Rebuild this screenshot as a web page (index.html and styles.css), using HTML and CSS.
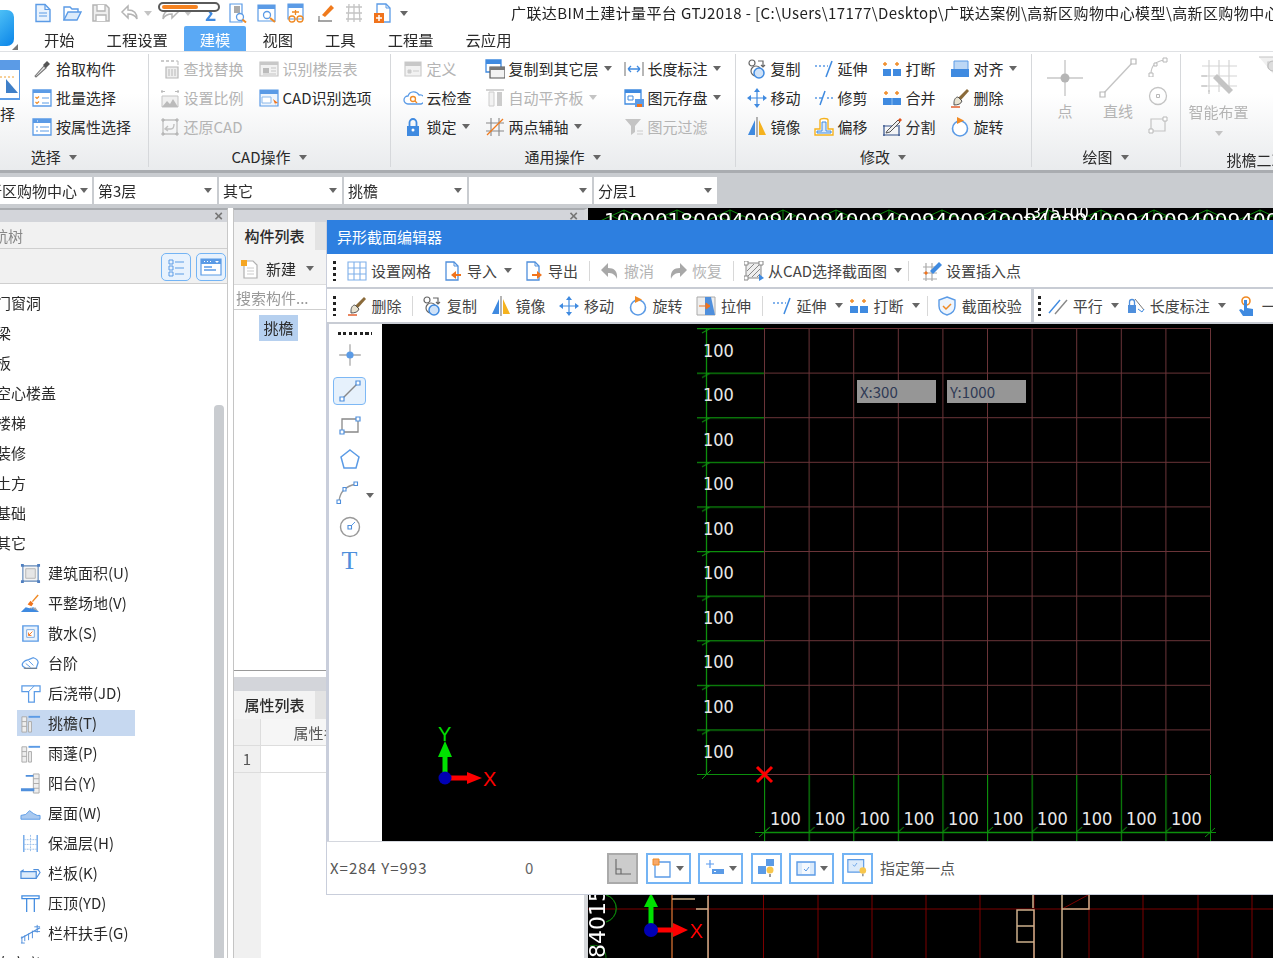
FILE: index.html
```html
<!DOCTYPE html>
<html lang="zh-CN">
<head>
<meta charset="utf-8">
<title>广联达BIM土建计量平台 GTJ2018</title>
<link rel="stylesheet" href="styles.css">
</head>
<body>
<svg class="defs" aria-hidden="true">
  <symbol id="doc" viewBox="0 0 20 20"><path d="M3 1.5h9l5 5v12H3z" fill="#eaf3fd" stroke="#5b9be6" stroke-width="1.4"/><path d="M12 1.5v5h5M6 10h8M6 13h8" fill="none" stroke="#5b9be6" stroke-width="1.2"/></symbol>
  <symbol id="open" viewBox="0 0 20 20"><path d="M2 17V4h6l2 2h6v3" fill="none" stroke="#5b9be6" stroke-width="1.4"/><path d="M2 17l4-8h13l-4 8z" fill="#dcebfb" stroke="#5b9be6" stroke-width="1.4"/></symbol>
  <symbol id="save" viewBox="0 0 20 20"><path d="M2 2h13l3 3v13H2z" fill="#eee" stroke="#b4b4b4" stroke-width="1.5"/><path d="M6 2v6h8V2M5 18v-6h10v6" fill="#fff" stroke="#b4b4b4" stroke-width="1.3"/></symbol>
  <symbol id="undo-g" viewBox="0 0 20 20"><path d="M8 3L2 9l6 6v-4c4 0 7 1 9 5 0-6-3-9-9-9z" fill="#fff" stroke="#b4b4b4" stroke-width="1.5"/></symbol>
  <symbol id="qa1" viewBox="0 0 20 20"><path d="M2 1h12v18H2z" fill="#fff" stroke="#5b9be6" stroke-width="1.2"/><path d="M6 3h6v7H6z" fill="#aaa"/><circle cx="12" cy="14" r="3.5" fill="#fff" stroke="#5b9be6" stroke-width="1.3"/><path d="M14.5 16.5l3.5 3" stroke="#f08a24" stroke-width="2"/></symbol>
  <symbol id="qa2" viewBox="0 0 20 20"><path d="M1 2h17v16H1z" fill="#fff" stroke="#5b9be6" stroke-width="1.2"/><path d="M1 2h17v4H1z" fill="#5b9be6"/><circle cx="10" cy="12" r="3.5" fill="#fff" stroke="#5b9be6" stroke-width="1.3"/><path d="M13 15l5 4" stroke="#f08a24" stroke-width="2.2"/></symbol>
  <symbol id="qa3" viewBox="0 0 20 20"><path d="M2 1h15v15H2z" fill="#fff" stroke="#5b9be6" stroke-width="1.2"/><path d="M2 1h15v4H2z" fill="#5b9be6"/><path d="M6 9h7M9.500 7v5" stroke="#f08a24" stroke-width="1.3"/><circle cx="6" cy="16" r="3" fill="none" stroke="#f08a24" stroke-width="1.3"/><circle cx="14" cy="16" r="3" fill="none" stroke="#f08a24" stroke-width="1.3"/></symbol>
  <symbol id="qa4" viewBox="0 0 20 20"><path d="M7 12L16 2l3 3-9 9z" fill="#f07a1c"/><path d="M3 18h14M4 13v5" stroke="#888" stroke-width="1.3" fill="none"/></symbol>
  <symbol id="qa5" viewBox="0 0 20 20"><path d="M2 4h16M2 10h16M2 16h16M5 1l-1 18M10 1v18M15 1l1 18" stroke="#c4c4c4" stroke-width="1.3" fill="none"/></symbol>
  <symbol id="qa6" viewBox="0 0 20 20"><path d="M4 1h9l4 4v14H4z" fill="#fff" stroke="#5b9be6" stroke-width="1.3"/><path d="M13 1v4h4" fill="none" stroke="#5b9be6"/><path d="M1 10h10v10H1z" fill="#f0731c"/><path d="M3 15h6M6 12v6" stroke="#fff" stroke-width="1.5"/></symbol>
  <symbol id="pick" viewBox="0 0 20 20"><path d="M3 17l9-10 2 2-10 9z" fill="#e8e8e8" stroke="#777" stroke-width="1.1"/><path d="M11 6l4-4 3 3-4 4z" fill="#555"/></symbol>
  <symbol id="batch" viewBox="0 0 20 20"><path d="M1 2h18v16H1z" fill="#fff" stroke="#5b9be6" stroke-width="1.3"/><path d="M1 2h18v3H1z" fill="#5b9be6"/><path d="M3.500 9l1.500 1.500 2-2M3.500 14l1.500 1.500 2-2" fill="none" stroke="#f08a24" stroke-width="1.2"/><path d="M10 10h7M10 15h7" stroke="#5b9be6" stroke-width="1.2"/></symbol>
  <symbol id="prop" viewBox="0 0 20 20"><path d="M1 2h18v16H1z" fill="#fff" stroke="#5b9be6" stroke-width="1.3"/><path d="M1 2h18v4H1z" fill="#5b9be6"/><path d="M5 4h1" stroke="#fff"/><path d="M4 10h2M4 14h2M8 10h9M8 14h9" stroke="#5b9be6" stroke-width="1.2"/></symbol>
  <symbol id="find" viewBox="0 0 20 20"><path d="M1 2h3M6 2h3M11 2h3" stroke="#bbb" stroke-width="1.6"/><path d="M16 2h2v4" fill="none" stroke="#bbb"/><path d="M6 8h12v11H6z" fill="#eee" stroke="#b8b8b8" stroke-width="1.2"/><path d="M9 10v7M12 10v7M15 10v7" stroke="#b8b8b8"/></symbol>
  <symbol id="layer" viewBox="0 0 20 20"><path d="M1 3h18v14H1z" fill="#f2f2f2" stroke="#c4c4c4" stroke-width="1.2"/><path d="M1 3h18v3H1z" fill="#c8c8c8"/><path d="M4 9h6v5H4z" fill="#bbb"/><path d="M12 9h5M12 12h5M4 15h13" stroke="#c4c4c4"/></symbol>
  <symbol id="scale" viewBox="0 0 20 20"><path d="M2 8h16v11H2z" fill="#f0f0f0" stroke="#c4c4c4"/><path d="M2 19l5-6 3 3 3-5 5 8z" fill="#bbb"/><path d="M2 2v3M18 2v3M1 3.500h4M15 3.500h4" stroke="#bbb" stroke-width="1.2"/></symbol>
  <symbol id="cadw" viewBox="0 0 20 20"><path d="M1 2h18v16H1z" fill="#eef5fd" stroke="#5b9be6" stroke-width="1.2"/><path d="M1 2h18v4H1z" fill="#5b9be6"/><path d="M14 11l5 4-3 .5 1 3z" fill="#f0731c"/><path d="M3 9h9v6H3z" fill="#fff" stroke="#8ab8ea"/></symbol>
  <symbol id="restore" viewBox="0 0 20 20"><path d="M3 3h14v14H3z" fill="none" stroke="#c0c0c0" stroke-width="1.3"/><path d="M1 3h4M3 1v4M15 3h4M17 1v4M1 17h4M3 15v4M15 17h4M17 15v4" stroke="#b0b0b0"/><path d="M8 9l-3 3 3 2M6 12h5c2 0 3-2 3-5" fill="none" stroke="#c0c0c0" stroke-width="1.4"/></symbol>
  <symbol id="def" viewBox="0 0 20 20"><path d="M2 3h16v14H2z" fill="#f2f2f2" stroke="#ccc" stroke-width="1.2"/><path d="M2 3h16v4H2z" fill="#c8c8c8"/><path d="M5 11h3v3H5zM10 12h6" fill="#ccc" stroke="#ccc"/></symbol>
  <symbol id="copyl" viewBox="0 0 20 20"><path d="M1 1h15v12H1z" fill="#fff" stroke="#3f8ae0" stroke-width="1.3"/><path d="M1 1h15v4H1z" fill="#3f8ae0"/><path d="M5 8h15v11H5z" fill="#f3f3f3" stroke="#555" stroke-width="1.2"/><path d="M5 8h15v3H5z" fill="#777"/></symbol>
  <symbol id="cloud" viewBox="0 0 20 20"><path d="M5 16a4 4 0 010-8 6 6 0 0111-1 4.500 4.500 0 012 9z" fill="#fff" stroke="#5b9be6" stroke-width="1.3"/><circle cx="10" cy="11" r="2.500" fill="none" stroke="#f08a24" stroke-width="1.3"/><path d="M12 13l2 2" stroke="#f08a24" stroke-width="1.3"/></symbol>
  <symbol id="autoal" viewBox="0 0 20 20"><path d="M1 2h18" stroke="#c4c4c4" stroke-width="1.5"/><path d="M4 4h5v14H4z" fill="#f2f2f2" stroke="#ccc"/><path d="M12 4h5v14h-5z" fill="#ccc"/></symbol>
  <symbol id="lock" viewBox="0 0 20 20"><path d="M4 9h12v10H4z" fill="#3f8ae0"/><path d="M6.500 9V5.500a3.500 3.500 0 017 0V9" fill="none" stroke="#3f8ae0" stroke-width="1.800"/><circle cx="10" cy="13" r="1.500" fill="#fff"/></symbol>
  <symbol id="axis2" viewBox="0 0 20 20"><path d="M6 1v18M14 1v18M1 6h18M1 14h18" stroke="#888" stroke-width="1.1"/><path d="M2 18L18 2" stroke="#f07a1c" stroke-width="1.3"/></symbol>
  <symbol id="lens" viewBox="0 0 20 20"><path d="M1 3v14M19 3v14" stroke="#888" stroke-width="1.2"/><path d="M4 10h12M4 10l3-3M4 10l3 3M16 10l-3-3M16 10l-3 3" fill="none" stroke="#3f8ae0" stroke-width="1.3"/></symbol>
  <symbol id="disk" viewBox="0 0 20 20"><path d="M1 2h16v14H1z" fill="#fff" stroke="#3f8ae0" stroke-width="1.3"/><path d="M1 2h16v3H1z" fill="#3f8ae0"/><path d="M4 8h5v4H4z" fill="none" stroke="#3f8ae0"/><path d="M11 11h9v8h-9z" fill="#5b9be6"/><path d="M13 16h5v3h-5z" fill="#f0731c"/></symbol>
  <symbol id="filter" viewBox="0 0 20 20"><path d="M1 2h16l-6 7v6l-4 3V9z" fill="#c4c4c4"/><path d="M13 14h6M13 17h6" stroke="#ccc"/></symbol>
  <symbol id="copy" viewBox="0 0 20 20"><circle cx="5" cy="4" r="3" fill="none" stroke="#666" stroke-width="1.200"/><path d="M11 2h5v6M14 6l2 2 2-2" fill="none" stroke="#666" stroke-width="1.200"/><circle cx="9" cy="12" r="5" fill="none" stroke="#666" stroke-width="1.200"/><circle cx="12" cy="14" r="5" fill="#cfe2f8" stroke="#3f8ae0" stroke-width="1.500"/></symbol>
  <symbol id="extend" viewBox="0 0 20 20"><path d="M1 7h2M5 7h2M9 7h2M13 7h1" stroke="#5b9be6" stroke-width="1.300"/><path d="M18 2l-6 16" stroke="#3f8ae0" stroke-width="1.500"/></symbol>
  <symbol id="break" viewBox="0 0 20 20"><path d="M1 10h8v7H1zM11 10h8v7h-8z" fill="#3f8ae0"/><path d="M3 3v4M1 5h4M15 3v4M13 5h4" stroke="#f08a24" stroke-width="1.400"/></symbol>
  <symbol id="merge" viewBox="0 0 20 20"><path d="M1 10h18v7H1z" fill="#3f8ae0"/><path d="M10 10v7" stroke="#8fc0f2"/><path d="M4 3v4M2 5h4M15 3v4M13 5h4" stroke="#f08a24" stroke-width="1.400"/></symbol>
  <symbol id="aligned" viewBox="0 0 20 20"><path d="M4 2h14v9H4z" fill="#bcd7f5" stroke="#5b9be6"/><path d="M1 10h18v8H1z" fill="#3f8ae0"/></symbol>
  <symbol id="move" viewBox="0 0 20 20"><path d="M10 3v14M3 10h14" stroke="#3f8ae0" stroke-width="1.200"/><path d="M10 0l3 4H7zM10 20l-3-4h6zM0 10l4-3v6zM20 10l-4 3V7z" fill="#3f8ae0"/></symbol>
  <symbol id="trim" viewBox="0 0 20 20"><path d="M1 10h2M13 10h2M17 10h2" stroke="#5b9be6" stroke-width="1.300"/><path d="M11 3L6 17" stroke="#3f8ae0" stroke-width="1.500"/><path d="M5 10h4" stroke="#3f8ae0" stroke-width="1.300"/></symbol>
  <symbol id="del" viewBox="0 0 20 20"><path d="M8 10L17 1l2 2-9 10z" fill="#8a6a3a"/><path d="M4 15c0-4 2-6 4-6l4 4c-1 3-4 4-8 4z" fill="#e8e2d0" stroke="#555"/><path d="M1 19h9" stroke="#e0521c" stroke-width="1.400"/></symbol>
  <symbol id="mirror" viewBox="0 0 20 20"><path d="M8 3v15H1z" fill="#3f8ae0"/><path d="M12 3v15h7z" fill="#f5b21e"/><path d="M10 0v20" stroke="#777" stroke-width="1.100"/></symbol>
  <symbol id="offset" viewBox="0 0 20 20"><path d="M1 18v-6h5V3c0-2 8-2 8 0v9h5v6z" fill="#fff" stroke="#f5b21e" stroke-width="1.400"/><path d="M3 16v-2h5V5h4v9h5v2z" fill="#dcebfb" stroke="#3f8ae0"/></symbol>
  <symbol id="split" viewBox="0 0 20 20"><path d="M1 9h15M1 18h17M2 8v11M17 8v11" fill="none" stroke="#32518a" stroke-width="1.200"/><path d="M5 14L16 3l2 2L8 15l-4 1z" fill="#eee" stroke="#555"/><path d="M16 3l2-2 2 2-2 2z" fill="#e0521c"/></symbol>
  <symbol id="rotate" viewBox="0 0 20 20"><circle cx="10" cy="11.500" r="7.500" fill="#fff" stroke="#5b9be6" stroke-width="1.600"/><path d="M7 0l7 3.500L7 7z" fill="#f08a24"/></symbol>
  <symbol id="bpoint" viewBox="0 0 40 40"><path d="M20 2v36M2 20h36" stroke="#c8c8c8" stroke-width="1.400"/><circle cx="20" cy="20" r="4.500" fill="#b5b5b5"/></symbol>
  <symbol id="bline" viewBox="0 0 40 40"><path d="M4 37L36 3" stroke="#c4c4c4" stroke-width="1.400"/><path d="M2 34h5v5H2zM33 1h5v5h-5z" fill="#fff" stroke="#b8b8b8" stroke-width="1.200"/></symbol>
  <symbol id="sarc" viewBox="0 0 20 20"><path d="M3 17C3 9 8 4 17 3" fill="none" stroke="#c4c4c4" stroke-width="1.200"/><path d="M1 16h4v4H1zM15 1h4v4h-4zM6 6h3v3H6z" fill="#fff" stroke="#b8b8b8"/></symbol>
  <symbol id="scirc" viewBox="0 0 20 20"><circle cx="10" cy="10" r="8.500" fill="none" stroke="#c4c4c4" stroke-width="1.300"/><path d="M8.500 8.500h3v3h-3z" fill="#fff" stroke="#b8b8b8"/></symbol>
  <symbol id="srect" viewBox="0 0 20 20"><path d="M3 5h14v12H3z" fill="none" stroke="#c4c4c4" stroke-width="1.200"/><path d="M1 15h4v4H1zM15 3h4v4h-4z" fill="#fff" stroke="#b8b8b8"/></symbol>
  <symbol id="smart" viewBox="0 0 40 40"><path d="M10 2v32M20 2v32M30 2v32M3 8h35M3 18h35M3 28h35" stroke="#d4d4d4" stroke-width="1.200"/><path d="M14 20l4-4 16 16-4 4z" fill="#c4c4c4"/><path d="M2 18h6M2 28h6M10 36v-4" stroke="#bbb"/></symbol>
  <symbol id="corner" viewBox="0 0 20 20"><path d="M0 1h20v5H9v5c0 3 6 3 6 5v3" fill="#f0f0f0" stroke="#c4c4c4" stroke-width="1.200"/><circle cx="14" cy="10" r="5" fill="#ddd" stroke="#bbb"/></symbol>
  <symbol id="big" viewBox="0 0 40 40"><path d="M0 1h40v38H0z" fill="#fff" stroke="#5b9be6" stroke-width="2"/><path d="M0 1h40v9H0z" fill="#5b9be6"/><path d="M4 17h32" stroke="#f0a030" stroke-dasharray="2 2"/><path d="M26 19l12 14H26z" fill="#3f7fc8"/></symbol>
  <symbol id="l1" viewBox="0 0 26 26"><path d="M6 6h4v4H6zM6 12h4v4H6zM6 18h4v4H6z" fill="#e8f2fd" stroke="#5b9be6"/><path d="M12 8h9M12 14h9M12 20h9" stroke="#5b9be6" stroke-width="1.200"/></symbol>
  <symbol id="l2" viewBox="0 0 26 26"><path d="M3 5h20v16H3z" fill="#fff" stroke="#5b9be6" stroke-width="1.200"/><path d="M3 5h20v5H3z" fill="#5b9be6"/><path d="M6 13h8M6 16h12" stroke="#5b9be6" stroke-width="1.400"/><path d="M6 7.500h1M9 7.500h1M12 7.500h1" stroke="#fff"/><path d="M17 7h4l-2 2z" fill="#fff"/></symbol>
  <symbol id="newd" viewBox="0 0 20 20"><path d="M4 2h9l4 4v13H4z" fill="#fff" stroke="#b0b0b0" stroke-width="1.200"/><path d="M7 9h7M7 12h7M7 15h7" stroke="#ccc"/><path d="M1 1h6v6H1z" fill="#f5a623"/></symbol>
  <symbol id="t-area" viewBox="0 0 22 22"><path d="M3 3h16v16H3z" fill="#f4f4f4" stroke="#5f86b8" stroke-width="1.200"/><path d="M6 6h10v10H6z" fill="#e6e6e6" stroke="#b4b4b4"/><path d="M1 1h3v3H1zM18 1h3v3h-3zM1 18h3v3H1zM18 18h3v3h-3z" fill="#4f7fc0"/></symbol>
  <symbol id="t-flat" viewBox="0 0 22 22"><path d="M1 20l5-5 4 1 4-1 6 5z" fill="#3f8ae0"/><path d="M8 12l3-4 3 3-2 3z" fill="#f0731c"/><path d="M13 9l6-7" stroke="#f08a24" stroke-width="1.500"/><path d="M10 15l2 2 4-2 3 4" fill="#aaa"/></symbol>
  <symbol id="t-apron" viewBox="0 0 22 22"><path d="M3 3h16v16H3z" fill="#e9f2fc" stroke="#5b9be6" stroke-width="1.500"/><path d="M7 7h8v8H7z" fill="#fff" stroke="#7aa9e0"/><path d="M13 9l-4 4M9 10v3h3" fill="none" stroke="#f0731c"/></symbol>
  <symbol id="t-step" viewBox="0 0 22 22"><path d="M3 14c-2-3 1-6 6-7l5-2c3 1 5 3 5 5l-2 6H6z" fill="#fff" stroke="#5b9be6" stroke-width="1.300"/><path d="M6 11l5 4M9 8l5 5" stroke="#5b9be6"/><path d="M4 16h14" stroke="#777"/></symbol>
  <symbol id="t-strip" viewBox="0 0 22 22"><path d="M2 3h19v6h-6v11H9V9H2z" fill="#fff" stroke="#5b9be6" stroke-width="1.300"/><path d="M9 9l6-6" stroke="#5b9be6"/></symbol>
  <symbol id="t-eave" viewBox="0 0 22 22"><path d="M2 4h5v16H2z" fill="#eee" stroke="#aaa"/><path d="M2 9h5M2 14h5M9 4h4M9 9h3v11H9z" fill="#eee" stroke="#aaa"/><path d="M9 3h12v2H9z" fill="#5b9be6"/></symbol>
  <symbol id="t-bal" viewBox="0 0 22 22"><path d="M14 1h6v20h-6z" fill="#eee" stroke="#aaa"/><path d="M14 6h6M14 11h6M14 16h6" stroke="#aaa"/><path d="M6 2h8v2H6zM1 16h14v3H1z" fill="#4f8fdc"/></symbol>
  <symbol id="t-roof" viewBox="0 0 22 22"><path d="M1 13l5-1 4-4 4 3 4 2h3v4H1z" fill="#a9c9f0" stroke="#5b9be6"/></symbol>
  <symbol id="t-ins" viewBox="0 0 22 22"><path d="M4 2v18M18 2v18" stroke="#5b9be6" stroke-width="1.300"/><path d="M11 2v18M4 7h14M4 12h14M4 17h14" stroke="#9cc0ea" stroke-dasharray="2 1"/></symbol>
  <symbol id="t-pan" viewBox="0 0 22 22"><path d="M1 9h16v7H1z" fill="#dcebfb" stroke="#4f8fdc" stroke-width="1.300"/><path d="M1 9l3-2M14 7h5l2 3-4 6" fill="none" stroke="#4f8fdc" stroke-width="1.200"/></symbol>
  <symbol id="t-cop" viewBox="0 0 22 22"><path d="M2 3h18v3H2z" fill="#fff" stroke="#3f8ae0" stroke-width="1.300"/><path d="M7 6v14M15 6v14" stroke="#3f8ae0" stroke-width="1.300"/></symbol>
  <symbol id="t-rail" viewBox="0 0 22 22"><path d="M1 16l20-11" stroke="#4f8fdc" stroke-width="1.300"/><path d="M2 14v7M5 13v6M9 11v7M13 8v8M18 2v8M15 4h6M15 9h6M1 21h4" stroke="#4f8fdc" fill="none"/></symbol>
  <symbol id="d-grid" viewBox="0 0 20 20"><path d="M1 1h18v18H1zM7 1v18M13 1v18M1 7h18M1 13h18" fill="#fff" stroke="#7fb0ea" stroke-width="1.100"/></symbol>
  <symbol id="d-imp" viewBox="0 0 20 20"><path d="M3 1h8l4 4v14H3z" fill="#fff" stroke="#4f8fdc" stroke-width="1.300"/><path d="M11 1v4h4" fill="none" stroke="#4f8fdc"/><path d="M18 13h-5V10l-5 4 5 4v-3h5z" fill="#f0731c"/></symbol>
  <symbol id="d-exp" viewBox="0 0 20 20"><path d="M3 1h8l4 4v14H3z" fill="#fff" stroke="#4f8fdc" stroke-width="1.300"/><path d="M11 1v4h4" fill="none" stroke="#4f8fdc"/><path d="M8 13h5V10l5 4-5 4v-3H8z" fill="#f0731c"/></symbol>
  <symbol id="d-undo" viewBox="0 0 20 20"><path d="M8 2L1 9l7 7v-4c4 0 7 1 9 6 1-8-3-11-9-11z" fill="#a8a8a8"/></symbol>
  <symbol id="d-redo" viewBox="0 0 20 20"><path d="M12 2l7 7-7 7v-4c-4 0-7 1-9 6-1-8 3-11 9-11z" fill="#a8a8a8"/></symbol>
  <symbol id="d-cad" viewBox="0 0 20 20"><path d="M2 2h15v15H2z" fill="#eee" stroke="#888"/><path d="M3 10l7-7M3 16L16 3M8 16l8-8M13 16l3-3" stroke="#888"/><path d="M0 0h4v4H0zM15 0h4v4h-4zM0 15h4v4H0z" fill="#fff" stroke="#888"/><path d="M15 13l5 4-5 3z" fill="#3f8ae0"/></symbol>
  <symbol id="d-ins" viewBox="0 0 20 20"><path d="M1 6h14M1 12h14M1 18h14M4 2v18M10 2v18" stroke="#aaa" stroke-width="1.200"/><path d="M8 10L17 1l3 3-9 9z" fill="#3f8ae0"/><path d="M4 10l2 2-2 2-2-2z" fill="#f0731c"/></symbol>
  <symbol id="d-str" viewBox="0 0 20 20"><path d="M1 1h18v18H1z" fill="#eee" stroke="#aaa"/><path d="M9 1h6l4 18H9z" fill="#4f8fdc"/><path d="M3 10h10M10 7l4 3-4 3z" fill="#f0731c" stroke="#f0731c"/></symbol>
  <symbol id="d-chk" viewBox="0 0 20 20"><path d="M10 1l8 3v6c0 5-4 8-8 9-4-1-8-4-8-9V4z" fill="#eef5fd" stroke="#5b9be6" stroke-width="1.400"/><path d="M6 10l3 3 5-5" fill="none" stroke="#f08a24" stroke-width="1.500"/></symbol>
  <symbol id="d-par" viewBox="0 0 20 20"><path d="M1 17L12 4" stroke="#3f8ae0" stroke-width="1.400"/><path d="M7 18L19 4" stroke="#888" stroke-width="1.400"/></symbol>
  <symbol id="d-len" viewBox="0 0 20 20"><path d="M3 9h8v8H3z" fill="#4f8fdc"/><path d="M4.500 9V6a2.500 2.500 0 015 0v3" fill="none" stroke="#4f8fdc" stroke-width="1.300"/><path d="M10 3l9 11" stroke="#777"/><path d="M13 13l4 3 2-3" fill="none" stroke="#3f8ae0"/></symbol>
  <symbol id="d-tch" viewBox="0 0 20 20"><circle cx="9" cy="5" r="4" fill="none" stroke="#f08a24" stroke-width="1.600"/><path d="M7 4h3v8l6 1v7H6l-4-6 2-1 3 2z" fill="#3f8ae0"/></symbol>
  <symbol id="p-pt" viewBox="0 0 20 20"><path d="M10 1v18M1 10h18" stroke="#aaa" stroke-width="1.100"/><circle cx="10" cy="10" r="3" fill="#5b9be6"/></symbol>
  <symbol id="p-line" viewBox="0 0 24 24"><path d="M4 20L20 4" stroke="#888" stroke-width="1.400"/><path d="M2 18h4v4H2zM18 2h4v4h-4z" fill="#fff" stroke="#4f8fdc" stroke-width="1.200"/></symbol>
  <symbol id="p-rect" viewBox="0 0 24 24"><path d="M4 6h16v13H4z" fill="none" stroke="#888" stroke-width="1.300"/><path d="M2 17h4v4H2zM18 4h4v4h-4z" fill="#fff" stroke="#4f8fdc" stroke-width="1.200"/></symbol>
  <symbol id="p-poly" viewBox="0 0 24 24"><path d="M12 3l9 7-3 11H6L3 10z" fill="#fff" stroke="#5b9be6" stroke-width="1.500"/></symbol>
  <symbol id="p-arc" viewBox="0 0 24 24"><path d="M3 20C4 11 10 5 20 3" fill="none" stroke="#999" stroke-width="1.300"/><path d="M1 19h3.500v3.500H1zM18 1h3.500v3.500H18zM7 6.500h3V10H7z" fill="#fff" stroke="#4f8fdc" stroke-width="1.100"/></symbol>
  <symbol id="p-circ" viewBox="0 0 24 24"><circle cx="12" cy="12" r="9.500" fill="none" stroke="#999" stroke-width="1.400"/><path d="M12 12l5-5" stroke="#5b9be6"/><path d="M10 10.500h3.500V14H10z" fill="#fff" stroke="#4f8fdc" stroke-width="1.100"/></symbol>
  <symbol id="s-ortho" viewBox="0 0 20 20"><path d="M3 1v15h15M3 11h5v5" fill="none" stroke="#666" stroke-width="1.100"/></symbol>
  <symbol id="s-snap" viewBox="0 0 20 20"><path d="M3 4h15v15H3z" fill="#fff" stroke="#5b9be6" stroke-width="1.300"/><path d="M1 1h6v6H1z" fill="#f7a869" stroke="#f08a24"/></symbol>
  <symbol id="s-plus" viewBox="0 0 20 20"><path d="M5 2v8M1 6h8" stroke="#5b9bf0" stroke-width="1.200"/><path d="M7 11h12v5H7z" fill="#5b9be6"/><path d="M9 13.500h2" stroke="#fff"/></symbol>
  <symbol id="s-tip1" viewBox="0 0 20 20"><path d="M10 1h8v7h-8zM2 8h8v8H2z" fill="#5b9be6"/><circle cx="14" cy="12" r="3.500" fill="#f8c64c"/><path d="M13 16h2v3h-2z" fill="#999"/></symbol>
  <symbol id="s-win" viewBox="0 0 20 20"><path d="M1 4h18v13H1z" fill="#dcebfb" stroke="#5b9be6" stroke-width="1.400"/><path d="M6 5h8v11H6z" fill="#fff" opacity=".7"/><path d="M8 11l2 2 3-4" fill="none" stroke="#5b9be6"/></symbol>
  <symbol id="s-tip2" viewBox="0 0 24 24"><path d="M1 2h19v15H1z" fill="#dcebfb" stroke="#5b9be6" stroke-width="1.400"/><path d="M7 8l2 2 3-4" fill="none" stroke="#5b9be6"/><circle cx="19" cy="15" r="4" fill="#f8c64c"/><path d="M18 19h2v3h-2z" fill="#999"/></symbol>
</svg>

<div class="app">
  <header class="titlebar">
    <div class="logo-slot"><span class="logo"></span><span class="logo-mark"></span></div>
    <div class="quick">
      <svg class="ic"><use href="#doc"/></svg>
      <svg class="ic"><use href="#open"/></svg>
      <svg class="ic"><use href="#save"/></svg>
      <span class="qa-drop"><svg class="ic"><use href="#undo-g"/></svg><i class="car car-off"></i></span>
      <span class="qa-drop"><svg class="ic flip"><use href="#undo-g"/></svg><i class="car car-off"></i></span>
      <span class="sigma">Σ</span>
      <svg class="ic"><use href="#qa1"/></svg>
      <svg class="ic"><use href="#qa2"/></svg>
      <svg class="ic"><use href="#qa3"/></svg>
      <svg class="ic"><use href="#qa4"/></svg>
      <svg class="ic"><use href="#qa5"/></svg>
      <svg class="ic"><use href="#qa6"/></svg>
      <i class="car qa-more"></i>
    </div>
    <div class="pill"><span class="pill-bar"></span></div>
    <div class="apptitle">广联达BIM土建计量平台 GTJ2018 - [C:\Users\17177\Desktop\广联达案例\高新区购物中心模型\高新区购物中心模型.GTJ]</div>
  </header>

  <nav class="tabs">
    <span class="tab">开始</span><span class="tab">工程设置</span><span class="tab tab-on">建模</span><span class="tab">视图</span><span class="tab">工具</span><span class="tab">工程量</span><span class="tab">云应用</span>
  </nav>

  <section class="ribbon">
    <div class="grp g1">
      <div class="grp-body">
        <div class="bigbtn"><svg class="ic-big"><use href="#big"/></svg><span>选择</span></div>
        <div class="col">
          <div class="it"><svg class="ic"><use href="#pick"/></svg>拾取构件</div>
          <div class="it"><svg class="ic"><use href="#batch"/></svg>批量选择</div>
          <div class="it"><svg class="ic"><use href="#prop"/></svg>按属性选择</div>
        </div>
      </div>
      <div class="grp-label">选择<i class="car"></i></div>
    </div>
    <div class="grp g2">
      <div class="grp-body">
        <div class="col c99">
          <div class="it off"><svg class="ic"><use href="#find"/></svg>查找替换</div>
          <div class="it off"><svg class="ic"><use href="#scale"/></svg>设置比例</div>
          <div class="it off"><svg class="ic"><use href="#restore"/></svg>还原CAD</div>
        </div>
        <div class="col">
          <div class="it off"><svg class="ic"><use href="#layer"/></svg>识别楼层表</div>
          <div class="it"><svg class="ic"><use href="#cadw"/></svg>CAD识别选项</div>
        </div>
      </div>
      <div class="grp-label">CAD操作<i class="car"></i></div>
    </div>
    <div class="grp g3">
      <div class="grp-body">
        <div class="col c82">
          <div class="it off"><svg class="ic"><use href="#def"/></svg>定义</div>
          <div class="it"><svg class="ic"><use href="#cloud"/></svg>云检查</div>
          <div class="it"><svg class="ic"><use href="#lock"/></svg>锁定<i class="car"></i></div>
        </div>
        <div class="col c139">
          <div class="it"><svg class="ic"><use href="#copyl"/></svg>复制到其它层<i class="car"></i></div>
          <div class="it off"><svg class="ic"><use href="#autoal"/></svg>自动平齐板<i class="car car-off"></i></div>
          <div class="it"><svg class="ic"><use href="#axis2"/></svg>两点辅轴<i class="car"></i></div>
        </div>
        <div class="col">
          <div class="it"><svg class="ic"><use href="#lens"/></svg>长度标注<i class="car"></i></div>
          <div class="it"><svg class="ic"><use href="#disk"/></svg>图元存盘<i class="car"></i></div>
          <div class="it off"><svg class="ic"><use href="#filter"/></svg>图元过滤</div>
        </div>
      </div>
      <div class="grp-label">通用操作<i class="car"></i></div>
    </div>
    <div class="grp g4">
      <div class="grp-body">
        <div class="col c67">
          <div class="it"><svg class="ic"><use href="#copy"/></svg>复制</div>
          <div class="it"><svg class="ic"><use href="#move"/></svg>移动</div>
          <div class="it"><svg class="ic"><use href="#mirror"/></svg>镜像</div>
        </div>
        <div class="col c68">
          <div class="it"><svg class="ic"><use href="#extend"/></svg>延伸</div>
          <div class="it"><svg class="ic"><use href="#trim"/></svg>修剪</div>
          <div class="it"><svg class="ic"><use href="#offset"/></svg>偏移</div>
        </div>
        <div class="col c68">
          <div class="it"><svg class="ic"><use href="#break"/></svg>打断</div>
          <div class="it"><svg class="ic"><use href="#merge"/></svg>合并</div>
          <div class="it"><svg class="ic"><use href="#split"/></svg>分割</div>
        </div>
        <div class="col">
          <div class="it"><svg class="ic"><use href="#aligned"/></svg>对齐<i class="car"></i></div>
          <div class="it"><svg class="ic"><use href="#del"/></svg>删除</div>
          <div class="it"><svg class="ic"><use href="#rotate"/></svg>旋转</div>
        </div>
      </div>
      <div class="grp-label">修改<i class="car"></i></div>
    </div>
    <div class="grp g5">
      <div class="grp-body">
        <div class="drawbtn"><svg class="ic-big"><use href="#bpoint"/></svg><span>点</span></div>
        <div class="drawbtn"><svg class="ic-big"><use href="#bline"/></svg><span>直线</span></div>
        <div class="col small">
          <svg class="ic"><use href="#sarc"/></svg>
          <svg class="ic"><use href="#scirc"/></svg>
          <svg class="ic"><use href="#srect"/></svg>
        </div>
      </div>
      <div class="grp-label">绘图<i class="car"></i></div>
    </div>
    <div class="grp g6">
      <div class="grp-body">
        <div class="drawbtn smartbtn"><svg class="ic-big"><use href="#smart"/></svg><span>智能布置</span><i class="car car-off"></i></div>
        <svg class="ic cornerico"><use href="#corner"/></svg>
      </div>
      <div class="grp-label g6-label">挑檐二次编辑</div>
    </div>
  </section>

  <div class="selbar">
    <div class="sel sel-first"><span>高新区购物中心</span><i class="car"></i></div>
    <div class="sel"><span>第3层</span><i class="car"></i></div>
    <div class="sel"><span>其它</span><i class="car"></i></div>
    <div class="sel"><span>挑檐</span><i class="car"></i></div>
    <div class="sel"><span></span><i class="car"></i></div>
    <div class="sel"><span>分层1</span><i class="car"></i></div>
  </div>

  <main class="work">
    <aside class="nav">
      <div class="pane-head"><span class="close">×</span></div>
      <div class="nav-title">导航树</div>
      <div class="nav-tools">
        <span class="navbtn"><svg class="ic-nav"><use href="#l1"/></svg></span>
        <span class="navbtn"><svg class="ic-nav"><use href="#l2"/></svg></span>
      </div>
      <div class="tree-wrap">
        <ul class="tree">
          <li class="lv1">门窗洞</li>
          <li class="lv1">梁</li>
          <li class="lv1">板</li>
          <li class="lv1">空心楼盖</li>
          <li class="lv1">楼梯</li>
          <li class="lv1">装修</li>
          <li class="lv1">土方</li>
          <li class="lv1">基础</li>
          <li class="lv1">其它</li>
          <li><svg class="ic-t"><use href="#t-area"/></svg>建筑面积(U)</li>
          <li><svg class="ic-t"><use href="#t-flat"/></svg>平整场地(V)</li>
          <li><svg class="ic-t"><use href="#t-apron"/></svg>散水(S)</li>
          <li><svg class="ic-t"><use href="#t-step"/></svg>台阶</li>
          <li><svg class="ic-t"><use href="#t-strip"/></svg>后浇带(JD)</li>
          <li class="on"><svg class="ic-t"><use href="#t-eave"/></svg>挑檐(T)</li>
          <li><svg class="ic-t"><use href="#t-eave"/></svg>雨蓬(P)</li>
          <li><svg class="ic-t"><use href="#t-bal"/></svg>阳台(Y)</li>
          <li><svg class="ic-t"><use href="#t-roof"/></svg>屋面(W)</li>
          <li><svg class="ic-t"><use href="#t-ins"/></svg>保温层(H)</li>
          <li><svg class="ic-t"><use href="#t-pan"/></svg>栏板(K)</li>
          <li><svg class="ic-t"><use href="#t-cop"/></svg>压顶(YD)</li>
          <li><svg class="ic-t"><use href="#t-rail"/></svg>栏杆扶手(G)</li>
          <li class="lv1">自定义</li>
        </ul>
        <div class="scroll"></div>
      </div>
    </aside>

    <section class="mid">
      <div class="pane-head"><span class="close">×</span></div>
      <div class="mid-tabs"><span class="mid-tab">构件列表</span></div>
      <div class="mid-tools"><svg class="ic"><use href="#newd"/></svg><span>新建</span><i class="car"></i></div>
      <div class="mid-search">搜索构件...</div>
      <div class="mid-list"><span class="chip">挑檐</span></div>
      <div class="mid-sp"></div>
      <div class="pane-head pane-head2"></div>
      <div class="mid-tabs"><span class="mid-tab">属性列表</span></div>
      <div class="ptable">
        <div class="prow phead"><span class="pno"></span><span class="pname">属性名称</span></div>
        <div class="prow"><span class="pno">1</span><span class="pname"></span></div>
        <div class="pfill"><span class="pno"></span></div>
      </div>
    </section>

    <section class="cad">
      <svg class="cad-svg" viewBox="588 208 685 750">
        <defs>
          <pattern id="roofs" x="598" y="208" width="53" height="14" patternUnits="userSpaceOnUse"><path d="M0 14L26 2l26 12M26 2v12M14 8l12 6 12-6" fill="none" stroke="#0c8a0c"/></pattern>
        </defs>
        <rect x="588" y="208" width="685" height="750" fill="#000"/>
        <rect x="598" y="208" width="675" height="12" fill="url(#roofs)"/>
        <text class="cad-top" x="604" y="227">1000018009400940094009400940094009400940094009400940094009400940094009400940094</text>
        <text class="cad-top2" x="1022" y="218">1375100</text>
        <path class="cad-red" d="M588 909H1273M708.500 895V958M763.500 895V958M818 895V958M872 895V958M926 895V958M980 895V958M1034 895V958M1089 895V958M1143 895V958M1198 895V958M1252 895V958M1062 909L1088 895"/>
        <path class="cad-org" d="M672 895V958"/>
        <path class="cad-tan" d="M708 896V958M672 899H695M696 909H708M1062 895V909H1089V895M1017 910H1034V942H1017ZM1017 926H1034M1034 910V958M1062 909V958M1033 895V908"/>
        <path class="cad-grn" d="M606 895a14 14 0 0 1 0 27a14 14 0 0 0 0-27M590 946a12 12 0 0 1 16 12"/>
        <text class="cad-rot" transform="translate(605 958) rotate(-90)">84015</text>
        <path class="ax-g" d="M651 932V904"/><path class="ax-gf" d="M651 893l7 14h-14z"/>
        <path class="ax-r" d="M651 930H676"/><path class="ax-rf" d="M688 930l-15-7v14z"/>
        <circle class="ax-b" cx="651" cy="930" r="7"/>
        <text class="ax-tr" x="690" y="938">X</text>
      </svg>
    </section>
  </main>

  <div class="dialog">
    <div class="dlg-title">异形截面编辑器</div>
    <div class="dlg-tb">
      <span class="grip"></span>
      <span class="di"><svg class="ic"><use href="#d-grid"/></svg>设置网格</span>
      <span class="di"><svg class="ic"><use href="#d-imp"/></svg>导入<i class="car"></i></span>
      <span class="di"><svg class="ic"><use href="#d-exp"/></svg>导出</span>
      <span class="sep"></span>
      <span class="di off"><svg class="ic"><use href="#d-undo"/></svg>撤消</span>
      <span class="di off di-redo"><svg class="ic"><use href="#d-redo"/></svg>恢复</span>
      <span class="sep"></span>
      <span class="di"><svg class="ic"><use href="#d-cad"/></svg>从CAD选择截面图<i class="car"></i></span>
      <span class="sep sep-tight"></span>
      <span class="di"><svg class="ic"><use href="#d-ins"/></svg>设置插入点</span>
    </div>
    <div class="dlg-tb dlg-tb2">
      <span class="grip"></span>
      <span class="di"><svg class="ic"><use href="#del"/></svg>删除</span>
      <span class="sep"></span>
      <span class="di"><svg class="ic"><use href="#copy"/></svg>复制</span>
      <span class="di"><svg class="ic"><use href="#mirror"/></svg>镜像</span>
      <span class="di"><svg class="ic"><use href="#move"/></svg>移动</span>
      <span class="di"><svg class="ic"><use href="#rotate"/></svg>旋转</span>
      <span class="di"><svg class="ic"><use href="#d-str"/></svg>拉伸</span>
      <span class="sep"></span>
      <span class="di dd"><svg class="ic"><use href="#extend"/></svg>延伸<i class="car"></i></span>
      <span class="di dd"><svg class="ic"><use href="#break"/></svg>打断<i class="car"></i></span>
      <span class="sep sep-after"></span>
      <span class="di"><svg class="ic"><use href="#d-chk"/></svg>截面校验</span>
      <span class="tb-end"></span>
      <span class="grip grip2"></span>
      <span class="di dd"><svg class="ic"><use href="#d-par"/></svg>平行<i class="car"></i></span>
      <span class="di dd"><svg class="ic"><use href="#d-len"/></svg>长度标注<i class="car"></i></span>
      <span class="di di-last"><svg class="ic"><use href="#d-tch"/></svg>一键</span>
    </div>
    <div class="dlg-body">
      <div class="palette">
        <span class="grip-h"></span>
        <span class="pb"><svg class="ic-p"><use href="#p-pt"/></svg></span>
        <span class="pb pb-on"><svg class="ic-p"><use href="#p-line"/></svg></span>
        <span class="pb"><svg class="ic-p"><use href="#p-rect"/></svg></span>
        <span class="pb"><svg class="ic-p"><use href="#p-poly"/></svg></span>
        <span class="pb pb-arc"><svg class="ic-p"><use href="#p-arc"/></svg><i class="car"></i></span>
        <span class="pb"><svg class="ic-p"><use href="#p-circ"/></svg></span>
        <span class="pb pb-t">T</span>
      </div>
      <div class="canvas">
        <svg class="canvas-svg" viewBox="382 324 891 517">
          <defs>
            <pattern id="cell" x="764" y="328" width="44.6" height="44.6" patternUnits="userSpaceOnUse"><path d="M.5 0V44.600M0 .5H44.600" stroke="#6a3438" fill="none"/></pattern>
            <pattern id="dimL" x="697" y="328" width="67" height="44.6" patternUnits="userSpaceOnUse"><path d="M0 .5H67M9.500 0V44.600" stroke="#0c8f0c" fill="none" stroke-width="1.300"/><path d="M5 5L14 0" stroke="#0c8f0c" fill="none"/></pattern>
            <pattern id="dimB" x="764" y="774" width="44.6" height="67" patternUnits="userSpaceOnUse"><path d="M.5 0V67M0 58.500H44.600" stroke="#0c8f0c" fill="none" stroke-width="1.300"/><path d="M0 58.500L6 53" stroke="#0c8f0c" fill="none"/></pattern>
          </defs>
          <rect x="382" y="324" width="891" height="517" fill="#000"/>
          <rect x="764" y="328" width="446" height="446" fill="url(#cell)"/>
          <path class="grid-end" d="M1210.500 328V774M764 774.500H1210"/>
          <rect x="697" y="328" width="67" height="447" fill="url(#dimL)"/>
          <path class="dim-g" d="M697 774.500H764M702 779L711 770"/>
          <rect x="764" y="775" width="446" height="66" fill="url(#dimB)"/>
          <path class="dim-g" d="M1210.500 775V841M755 832.500H1216M1205 837L1215 828M759 837L769 828"/>
          <g class="lab">
            <text x="703" y="357">100</text><text x="703" y="401">100</text><text x="703" y="446">100</text><text x="703" y="490">100</text><text x="703" y="535">100</text><text x="703" y="579">100</text><text x="703" y="624">100</text><text x="703" y="668">100</text><text x="703" y="713">100</text><text x="703" y="758">100</text>
            <text x="770" y="825">100</text><text x="814.500" y="825">100</text><text x="859" y="825">100</text><text x="903.500" y="825">100</text><text x="948" y="825">100</text><text x="992.500" y="825">100</text><text x="1037" y="825">100</text><text x="1081.500" y="825">100</text><text x="1126" y="825">100</text><text x="1171" y="825">100</text>
          </g>
          <path class="cross" d="M757 767L772 782M772 767L757 782"/>
          <path class="ax-g" d="M445 778V754"/><path class="ax-gf" d="M445 741l7 16h-14z"/>
          <path class="ax-r" d="M445 778H470"/><path class="ax-rf" d="M482 778l-15-6v12z"/>
          <circle class="ax-b" cx="445" cy="778" r="6.500"/>
          <text class="ax-ty" x="438" y="741">Y</text>
          <text class="ax-tr" x="483" y="786">X</text>
        </svg>
        <span class="coord coord-x">X:300</span>
        <span class="coord coord-y">Y:1000</span>
      </div>
    </div>
    <div class="status">
      <span class="st-xy">X=284 Y=993</span>
      <span class="st-zero">0</span>
      <span class="sb sb-on"><svg class="ic"><use href="#s-ortho"/></svg></span>
      <span class="sb sb-w"><svg class="ic"><use href="#s-snap"/></svg><i class="car"></i></span>
      <span class="sb sb-w"><svg class="ic"><use href="#s-plus"/></svg><i class="car"></i></span>
      <span class="sb"><svg class="ic"><use href="#s-tip1"/></svg></span>
      <span class="sb sb-w"><svg class="ic"><use href="#s-win"/></svg><i class="car"></i></span>
      <span class="sb"><svg class="ic"><use href="#s-tip2"/></svg></span>
      <span class="st-msg">指定第一点</span>
    </div>
  </div>
</div>
</body>
</html>
```
FILE: styles.css
```css
* { box-sizing: border-box; }
html, body { margin: 0; padding: 0; background: #fff; }
body { width: 1273px; height: 958px; overflow: hidden; font: 15px/20px "Noto Sans CJK SC", "Liberation Sans", sans-serif; color: #2a2a2a; }
.defs { position: absolute; width: 0; height: 0; }
.app { position: relative; width: 1273px; height: 958px; overflow: hidden; display: flex; flex-direction: column; filter: blur(.35px); }
i { font-style: normal; }
.ic { width: 20px; height: 20px; flex: none; display: block; }
.flip { transform: scaleX(-1); }
.ic-big { width: 40px; height: 40px; display: block; flex: none; }
.car { display: inline-block; width: 0; height: 0; border: 4px solid transparent; border-top: 5px solid #666; border-bottom: 0; margin-left: 8px; flex: none; }
.car-off { border-top-color: #c4c4c4; }

.titlebar { height: 26px; position: relative; display: flex; align-items: center; flex: none; }
.logo-slot { width: 33px; flex: none; align-self: flex-start; position: relative; }
.logo { position: absolute; left: -14px; top: 10px; width: 28px; height: 36px; border-radius: 7px; background: linear-gradient(135deg, #5fd0fa, #0a84e8); }
.logo-mark { position: absolute; left: 12px; top: 44px; border: 3px solid transparent; border-right-color: #777; border-bottom-color: #777; }
.quick { display: flex; align-items: center; gap: 9px; width: 478px; flex: none; }
.qa-drop { display: flex; align-items: center; width: 31px; }
.qa-drop .car { margin-left: 4px; }
.sigma { width: 18px; margin-left: 5px; margin-right: -4px; color: #3f8ae0; font-size: 18px; font-weight: 700; }
.qa-more { margin-left: -2px; }
.pill { position: absolute; left: 158px; top: 2px; width: 62px; height: 10px; border: 2px solid #5a5a5a; border-radius: 6px; background: #fff; }
.pill-bar { position: absolute; left: 2px; top: 1px; width: 36px; height: 4px; background: #f58220; border-radius: 2px; }
.apptitle { white-space: nowrap; flex: none; font-size: 15px; color: #222; letter-spacing: .4px; }

.tabs { height: 25px; display: flex; flex: none; padding-left: 28px; align-items: stretch; position: relative; font-size: 15.300px; }
.tab { padding: 1px 16px 0; line-height: 24px; }
.tab-on { background: #5aa9f5; color: #fff; border-radius: 2px 2px 0 0; }

.ribbon { height: 122px; flex: none; display: flex; border-top: 1px solid #dfe1e4; border-bottom: 3px solid #a9acb0; background: linear-gradient(#fff 35%, #e9ebed); }
.grp { border-right: 1px solid #d6d8db; margin: 2px 0 3px; display: flex; flex-direction: column; flex: none; }
.grp-body { height: 88px; display: flex; }
.grp-label { height: 25px; display: flex; align-items: center; justify-content: center; padding-top: 5px; }
.g1 { width: 188.500px; margin-left: -40px; }
.g2 { width: 242px; padding-left: 11px; }
.g2 .grp-label { margin-left: -11px; }
.g3 { width: 345px; padding-left: 12px; }
.g3 .grp-label { margin-left: -12px; }
.g4 { width: 296px; padding-left: 11px; }
.g4 .grp-label { margin-left: -11px; }
.g5 { width: 149px; }
.g6 { width: 100px; border-right: 0; }
.col { display: flex; flex-direction: column; }
.c99 { width: 99px; }
.c82 { width: 82px; }
.c139 { width: 139px; }
.c67 { width: 67px; }
.c68 { width: 68px; }
.it { height: 29px; display: flex; align-items: center; gap: 4px; white-space: nowrap; flex: none; }
.it .car { margin-left: 1px; }
.off { color: #b4b4b4; }
.bigbtn { width: 80px; margin-right: -8px; display: flex; flex-direction: column; align-items: center; flex: none; padding-top: 6px; }
.bigbtn span { margin-top: 1px; line-height: 26px; }
.drawbtn { display: flex; flex-direction: column; align-items: center; width: 53px; color: #b4b4b4; flex: none; padding-top: 4px; }
.drawbtn span { margin-top: 3px; }
.g5 .drawbtn:first-child { margin-left: 7px; }
.small { justify-content: space-between; height: 80px; margin-left: 3px; padding-top: 3px; }
.smartbtn { width: 76px; }
.smartbtn span { white-space: nowrap; margin-top: 4px; }
.smartbtn .car { margin: 9px 0 0; }
.g6 .grp-body { position: relative; }
.cornerico { position: absolute; left: 78px; top: 2px; }
.g6-label { justify-content: flex-start; padding: 10px 0 0 46px; white-space: nowrap; }

.selbar { height: 35px; flex: none; background: #c9ccd0; display: flex; gap: 2px; padding-top: 4px; align-items: flex-start; }
.sel { width: 123px; height: 27px; background: #fff; display: flex; align-items: center; justify-content: space-between; padding: 0 5px 0 4px; flex: none; }
.sel-first { width: 127px; margin-left: -35px; padding-left: 7px; white-space: nowrap; padding-right: 4px; }
.sel .car { margin-left: 0; }

.work { flex: 1; display: flex; min-height: 0; }
.nav { width: 228px; flex: none; display: flex; flex-direction: column; border-top: 2px solid #a9acb0; border-right: 1px solid #c8c8c8; }
.pane-head { height: 12px; background: #d3d5da; position: relative; flex: none; }
.close { position: absolute; right: 4px; top: -4px; color: #777; font: 700 15px/20px "Liberation Sans", sans-serif; }
.nav-title { height: 27px; background: #f1f1f1; border-bottom: 1px solid #cfcfcf; line-height: 27px; color: #888; text-indent: -22px; white-space: nowrap; flex: none; overflow: hidden; }
.nav-tools { height: 35px; background: #f1f1f1; border-bottom: 1px solid #cfcfcf; display: flex; justify-content: flex-end; gap: 5px; padding: 4px 1px 0 0; flex: none; }
.navbtn { width: 30px; height: 28px; border: 1px solid #74b4f4; border-radius: 5px; background: #e8f2fd; display: flex; align-items: center; justify-content: center; }
.ic-nav { width: 26px; height: 26px; }
.tree-wrap { flex: 1; position: relative; background: #fff; overflow: hidden; }
.tree { list-style: none; margin: 0; padding: 4px 0 0; }
.tree li { height: 30px; display: flex; align-items: center; padding-left: 20px; gap: 7px; white-space: nowrap; position: relative; z-index: 0; }
.tree li.lv1 { padding-left: 0; margin-left: -4px; }
.tree li.on::before { content: ""; position: absolute; z-index: -1; left: 17px; width: 118px; top: 2px; height: 26px; background: #c6d8f0; }
.ic-t { width: 21px; height: 21px; flex: none; }
.scroll { position: absolute; left: 214px; top: 121px; bottom: -10px; width: 10px; background: #c9ccd0; border-radius: 4px 4px 0 0; }

.mid { width: 355px; margin-left: 5px; flex: none; display: flex; flex-direction: column; border-top: 2px solid #a9acb0; border-left: 1px solid #c4c4c4; border-right: 4px solid #d6d8db; }
.mid > .pane-head .close { right: 6px; }
.mid-tabs { height: 28px; background: #e3e3e3; flex: none; display: flex; }
.mid-tab { background: #f3f3f3; width: 81px; text-align: center; line-height: 27px; font-weight: 500; }
.mid-tools { height: 35px; background: #f3f3f3; border-bottom: 1px solid #ddd; display: flex; align-items: center; gap: 6px; padding: 3px 0 0 6px; flex: none; }
.mid-tools .car { margin-left: 4px; }
.mid-search { height: 25px; border-bottom: 1px solid #cfcfcf; color: #999; padding-left: 2px; line-height: 25px; flex: none; }
.mid-list { height: 361px; border-bottom: 1px solid #9a9a9a; padding: 5px 0 0 25px; flex: none; }
.chip { display: inline-block; width: 39px; height: 26px; background: #b6d0ef; text-align: center; line-height: 26px; }
.mid-sp { height: 6px; flex: none; }
.pane-head2 { height: 14px; }
.ptable { flex: 1; display: flex; flex-direction: column; }
.prow { display: flex; height: 27px; flex: none; border-bottom: 1px solid #ddd; }
.phead { background: #f6f6f6; color: #555; }
.pno { width: 27px; background: #f0f0f0; border-right: 1px solid #ddd; text-align: center; line-height: 25px; flex: none; color: #555; }
.pname { width: 126px; text-align: center; line-height: 27px; border-right: 1px solid #ddd; white-space: nowrap; }
.pfill { flex: 1; display: flex; }
.pfill .pno { border-right: 0; }

.cad { flex: 1; min-width: 0; }
.cad-svg { width: 100%; height: 100%; display: block; }
.cad-top { fill: #fff; font: 20px "DejaVu Sans", sans-serif; }
.cad-top2 { fill: #fff; font: 15px "DejaVu Sans", sans-serif; }
.cad-red { stroke: #7c0000; fill: none; }
.cad-org { stroke: #b8602a; fill: none; stroke-width: 1.500; }
.cad-tan { stroke: #cdb08c; fill: none; stroke-width: 1.500; }
.cad-grn { stroke: #0a7a0a; fill: none; }
.cad-rot { fill: #fff; font: 22px "DejaVu Sans", sans-serif; }
.ax-g { stroke: #00e000; stroke-width: 5; fill: none; }
.ax-gf { fill: #00e000; }
.ax-r { stroke: #f00; stroke-width: 5; fill: none; }
.ax-rf { fill: #f00; }
.ax-b { fill: #0000b4; }
.ax-tr { fill: #f00; font: 20px "Liberation Sans", sans-serif; }
.ax-ty { fill: #00e000; font: 20px "Liberation Sans", sans-serif; }

.dialog { position: absolute; left: 326px; top: 220px; width: 960px; height: 675px; background: #fff; border: 1px solid #c9cedb; border-width: 0 0 1px 1px; display: flex; flex-direction: column; }
.dlg-title { height: 34px; background: #2d7fe0; color: #fff; line-height: 33px; padding-left: 10px; flex: none; }
.dlg-tb { height: 35px; flex: none; display: flex; align-items: center; gap: 12px; padding-left: 6px; border-bottom: 2px solid #c8ccd4; white-space: nowrap; color: #444; }
.dlg-tb2 { gap: 13.500px; }
.grip { width: 3px; height: 20px; flex: none; margin-right: -1px; background: repeating-linear-gradient(#222 0 3px, transparent 3px 6px); }
.dlg-tb2 .grip { margin-right: -3px; }
.dlg-tb2 .grip2 { margin-left: -9.500px; margin-right: -6.500px; }
.di { display: flex; align-items: center; gap: 4px; flex: none; }
.dlg-tb2 .di { gap: 5px; }
.di .car { margin-left: 3px; }
.dlg-tb2 .dd { margin-right: -7.500px; }
.di.off { color: #b4b4b4; }
.di-redo { margin-left: 2px; }
.di-last { margin-left: 5px; }
.dlg-tb .sep { width: 1px; height: 20px; background: #d8d8d8; flex: none; margin: 0 -2px 0 -1px; }
.dlg-tb .sep + .di-x { margin-left: 0; }
.dlg-tb .sep-tight { margin-left: -6px; margin-right: 1px; }
.dlg-tb2 .sep { margin: 0 -4.500px 0 -3px; }
.dlg-tb2 .sep-after { margin-left: 1px; }
.tb-end { width: 3px; align-self: stretch; background: #c8ccd4; margin-left: -4.500px; flex: none; }
.dlg-body { height: 517px; display: flex; flex: none; }
.palette { width: 55px; flex: none; background: #fff; border-left: 2px solid #c9cedb; display: flex; flex-direction: column; align-items: flex-start; padding: 8px 0 0 4px; }
.grip-h { width: 34px; height: 3px; flex: none; margin: 0 0 5px 5px; background: repeating-linear-gradient(90deg, #222 0 3px, transparent 3px 5.500px); }
.pb { width: 33px; height: 30px; display: flex; align-items: center; justify-content: center; margin-bottom: 4px; border: 1px solid transparent; border-radius: 4px; flex: none; }
.pb-on { background: #e6f1fc; border-color: #7db8f5; height: 28px; margin: 3px 0 5px; }
.ic-p { width: 24px; height: 24px; flex: none; }
.pb-arc { position: relative; justify-content: flex-start; padding-left: 2px; }
.pb-arc .car { position: absolute; left: 32px; top: 14px; margin: 0; }
.pb-t { color: #4f8fdc; font: 26px/30px "Liberation Serif", serif; }
.canvas { flex: 1; position: relative; min-width: 0; }
.canvas-svg { width: 891px; height: 517px; display: block; }
.grid-end { stroke: #6a3438; fill: none; }
.dim-g { stroke: #0c8f0c; fill: none; }
.lab text { fill: #e8e8e8; font: 18px "DejaVu Sans Condensed", "DejaVu Sans", sans-serif; }
.cross { stroke: #f00; stroke-width: 3; fill: none; }
.coord { position: absolute; top: 56px; width: 79px; height: 23px; background: #969696; color: #2f3a55; line-height: 23px; padding-left: 3px; }
.coord-x { left: 475px; }
.coord-y { left: 565px; }
.status { height: 54px; flex: none; display: flex; align-items: center; gap: 7.500px; border-top: 1px solid #d4d7de; padding: 0 0 1px 3px; color: #555; }
.st-xy { width: 187.500px; flex: none; letter-spacing: 1px; }
.st-zero { width: 74.500px; flex: none; color: #666; }
.sb { width: 31px; height: 31px; border: 2px solid #74b4f4; display: flex; align-items: center; justify-content: center; flex: none; background: #fff; }
.sb-on { background: #ccc; border-color: #aaa; }
.sb-w { width: 45px; }
.sb-w .car { margin-left: 4px; }
.st-msg { flex: none; }
```
